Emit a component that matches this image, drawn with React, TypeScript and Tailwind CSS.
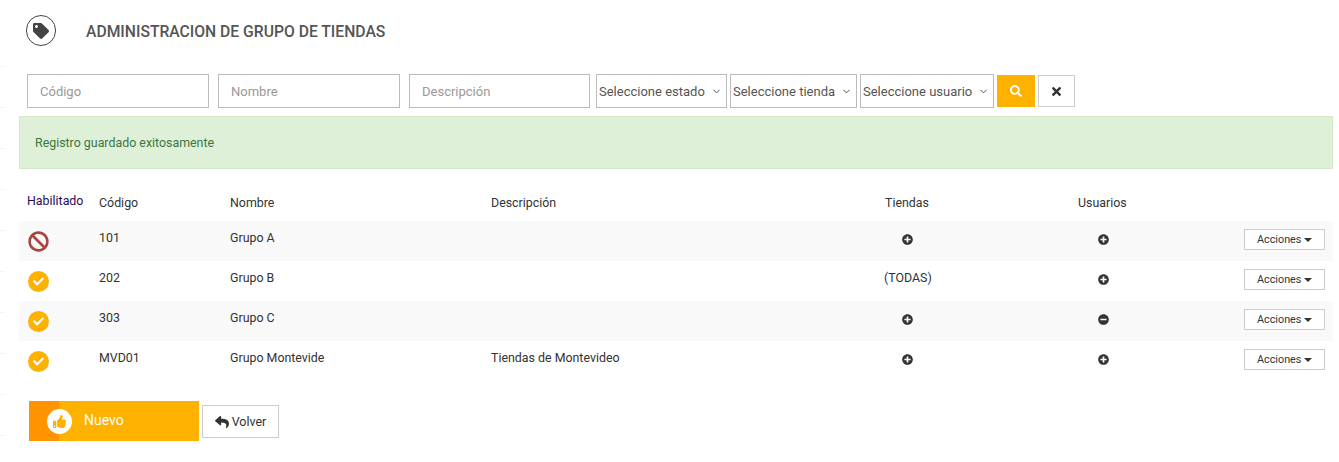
import { FaTag, FaBan, FaCheck, FaPlusCircle, FaMinusCircle, FaSearch, FaTimes, FaThumbsUp, FaReply } from "react-icons/fa";
import { ChevronDown } from "lucide-react";

const rows = [
  { on: false, code: "101", name: "Grupo A", desc: "", stores: "plus", users: "plus" },
  { on: true, code: "202", name: "Grupo B", desc: "", stores: "all", users: "plus" },
  { on: true, code: "303", name: "Grupo C", desc: "", stores: "plus", users: "minus" },
  { on: true, code: "MVD01", name: "Grupo Montevide", desc: "Tiendas de Montevideo", stores: "plus", users: "plus" },
];

const ticks = [66, 107, 148, 189, 230, 271, 312, 353, 394, 435];

const Field = ({ label, width }: { label: string; width: string }) => (
  <div className={`${width} h-[34px] border border-[#bbbbbb] bg-white pl-[12px] pt-[1px] flex items-center text-[13px] text-[#999999]`}>
    {label}
  </div>
);

const Dropdown = ({ label, width }: { label: string; width: string }) => (
  <div className={`${width} h-[34px] border border-[#bbbbbb] bg-white pl-[2px] pr-[4px] pt-[1px] flex items-center justify-between text-[13px] text-[#555555]`}>
    <span>{label}</span>
    <ChevronDown size={11} strokeWidth={2} className="text-[#444444]" />
  </div>
);

const Round = ({ kind }: { kind: string }) =>
  kind === "plus" ? (
    <FaPlusCircle size={11} className="text-[#333333]" />
  ) : (
    <FaMinusCircle size={11} className="text-[#333333]" />
  );

const App = () => {
  return (
    <div className="relative w-[1339px] h-[462px] bg-white overflow-hidden text-[12.4px] text-[#333333]" style={{ fontFamily: "Roboto, sans-serif" }}>
      <div className="absolute left-0 top-[66px] flex flex-col gap-[40px]">
        {ticks.map((t) => (
          <div key={t} className="w-[6px] h-[1px] bg-[#f4f4f4]" />
        ))}
      </div>

      <div className="h-[74px] flex items-start pt-[15px] pl-[26px]">
        <div className="w-[30px] h-[31px] rounded-full border border-[#444444] flex items-center justify-center">
          <FaTag size={16} className="text-[#444444]" />
        </div>
        <h1 className="ml-[30px] mt-[8px] text-[15.7px] leading-[18px] font-medium text-[#555555]">
          ADMINISTRACION DE GRUPO DE TIENDAS
        </h1>
      </div>

      <div className="flex items-center pl-[27px] h-[34px]">
        <Field label="Código" width="w-[182px]" />
        <Field label="Nombre" width="w-[182px] ml-[9px]" />
        <Field label="Descripción" width="w-[181px] ml-[9px]" />
        <Dropdown label="Seleccione estado" width="w-[131px] ml-[6px]" />
        <Dropdown label="Seleccione tienda" width="w-[127px] ml-[3px]" />
        <Dropdown label="Seleccione usuario" width="w-[134px] ml-[3px]" />
        <div className="w-[38px] h-[32px] ml-[3px] bg-[#ffb100] flex items-center justify-center">
          <FaSearch size={12} className="text-white" />
        </div>
        <div className="w-[37px] h-[32px] ml-[3px] border border-[#cccccc] flex items-center justify-center">
          <FaTimes size={13} className="text-[#333333]" />
        </div>
      </div>

      <div className="ml-[19px] mt-[8px] w-[1314px] h-[53px] bg-[#dff0d8] border border-[#d6e9c6] pl-[15px] pt-[2px] flex items-center text-[#3c763d]">
        Registro guardado exitosamente
      </div>

      <div className="ml-[19px] w-[1314px] mt-[17px]">
        <div className="h-[35px] grid grid-cols-[80px_131px_261px_394px_193px_100px_1fr]">
          <div className="pl-[8px] pt-[6px] text-[#2b0a5c]">Habilitado</div>
          <div className="pt-[8px]">Código</div>
          <div className="pt-[8px]">Nombre</div>
          <div className="pt-[8px]">Descripción</div>
          <div className="pt-[8px]">Tiendas</div>
          <div className="pt-[8px]">Usuarios</div>
        </div>
        {rows.map((row, i) => (
          <div key={row.code} className={`h-[40px] grid grid-cols-[80px_131px_261px_394px_193px_100px_1fr] ${i % 2 === 0 ? "bg-[#f9f9f9]" : "bg-white"}`}>
            <div className="pl-[9px] pt-[10px]">
              {row.on ? (
                <div className="w-[21px] h-[21px] rounded-full bg-[#ffb100] flex items-center justify-center">
                  <FaCheck size={11} className="text-white" />
                </div>
              ) : (
                <FaBan size={21} className="text-[#a94442]" />
              )}
            </div>
            <div className="pt-[8px]">{row.code}</div>
            <div className="pt-[8px]">{row.name}</div>
            <div className="pt-[8px]">{row.desc}</div>
            <div className="pt-[8px]">
              {row.stores === "all" ? (
                <span className="-ml-[1px]">(TODAS)</span>
              ) : (
                <div className="pl-[17px] pt-[5px]">
                  <Round kind={row.stores} />
                </div>
              )}
            </div>
            <div className="pl-[20px] pt-[13px]">
              <Round kind={row.users} />
            </div>
            <div className="flex justify-end pr-[8px] pt-[8px]">
              <div className="w-[81px] h-[21px] border border-[#cccccc] bg-white pl-[12px] pt-[1px] flex items-center gap-[3px] text-[10.8px]">
                Acciones
                <span className="w-0 h-0 border-x-[4px] border-t-[4px] border-x-transparent border-t-[#333333]" />
              </div>
            </div>
          </div>
        ))}
      </div>

      <div className="flex items-start ml-[29px] mt-[20px]">
        <div className="w-[170px] h-[40px] bg-[#ffb100] flex items-center relative">
          <div className="w-[30px] h-full bg-[#ff9400]" />
          <div className="absolute left-[18px] top-[8px] w-[25px] h-[25px] rounded-full bg-white flex items-center justify-center">
            <FaThumbsUp size={13} className="text-[#ffb100]" />
          </div>
          <span className="ml-[25px] pb-[2px] text-white text-[14px]">Nuevo</span>
        </div>
        <div className="ml-[3px] mt-[4px] w-[77px] h-[33px] border border-[#cccccc] pt-[1px] flex items-center justify-center gap-[3px] text-[12.5px]">
          <FaReply size={14} /> Volver
        </div>
      </div>
    </div>
  );
};

export default App;
